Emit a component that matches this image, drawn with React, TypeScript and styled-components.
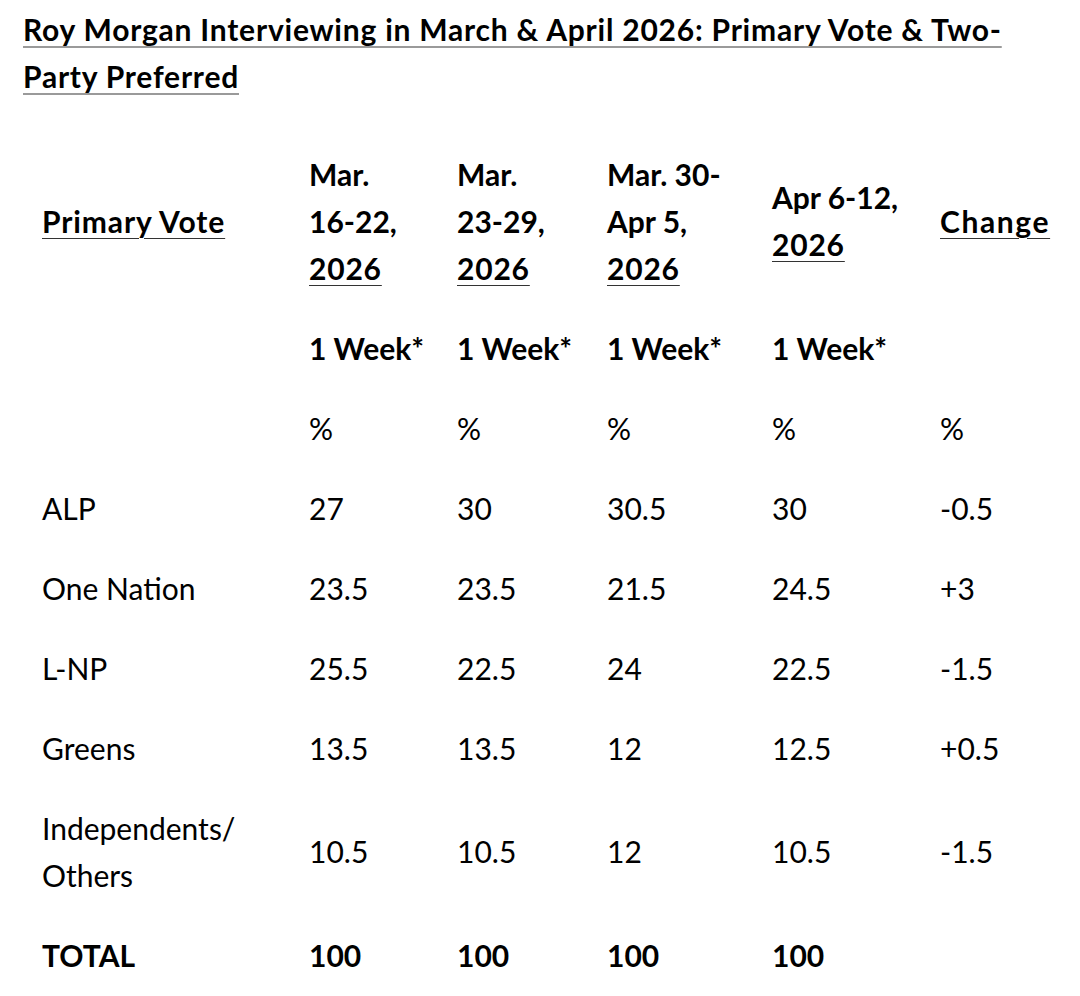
import React from 'react'
import styled, { createGlobalStyle } from 'styled-components'

const GlobalStyle = createGlobalStyle`
    html, body {
        margin: 0;
        padding: 0;
        background: #ffffff;
    }
    body {
        font-family: Lato, 'Liberation Sans', sans-serif;
        color: #000000;
    }
`

const Page = styled.div`
    padding: 6px 23px 0 23px;
    width: 1080px;
    box-sizing: border-box;
`

const Title = styled.h2`
    margin: 0 0 34px 0;
    font-size: 30px;
    line-height: 47px;
    font-weight: 700;
`

const TitleLink = styled.span`
    letter-spacing: 0.78px;
    text-decoration: underline;
    text-decoration-color: #9a9a9a;
    text-decoration-thickness: 2px;
    text-underline-offset: 5px;
`

const Table = styled.table`
    border-collapse: collapse;
    table-layout: fixed;
    width: 1047px;
    font-size: 30px;
    line-height: 47px;
`

const Cell = styled.td<{ $bold?: boolean }>`
    padding: 16.5px 10px 16.5px 19px;
    vertical-align: middle;
    text-align: left;
    font-weight: ${(p) => (p.$bold ? 700 : 400)};
    white-space: nowrap;
`

const Underlined = styled.span<{ $spacing?: number }>`
    letter-spacing: ${(p) => p.$spacing ?? 0}px;
    text-decoration: underline;
    text-decoration-color: #333333;
    text-decoration-thickness: 1px;
    text-underline-offset: 5px;
`

const widths = [267, 148, 150, 165, 168, 149]

const periods: string[][] = [
    ['Mar.', '16-22,'],
    ['Mar.', '23-29,'],
    ['Mar. 30-', 'Apr 5,'],
    ['Apr 6-12,'],
]

const rows: { label: React.ReactNode; values: string[] }[] = [
    { label: 'ALP', values: ['27', '30', '30.5', '30', '-0.5'] },
    { label: 'One Nation', values: ['23.5', '23.5', '21.5', '24.5', '+3'] },
    { label: 'L-NP', values: ['25.5', '22.5', '24', '22.5', '-1.5'] },
    { label: 'Greens', values: ['13.5', '13.5', '12', '12.5', '+0.5'] },
    {
        label: (
            <>
                Independents/
                <br />
                Others
            </>
        ),
        values: ['10.5', '10.5', '12', '10.5', '-1.5'],
    },
]

export default function App() {
    return (
        <>
            <GlobalStyle />
            <Page>
                <Title>
                    <TitleLink>
                        Roy Morgan Interviewing in March &amp; April 2026: Primary Vote &amp; Two-Party Preferred
                    </TitleLink>
                </Title>
                <Table>
                    <colgroup>
                        {widths.map((w, i) => (
                            <col key={i} style={{ width: w }} />
                        ))}
                    </colgroup>
                    <tbody>
                        <tr>
                            <Cell $bold>
                                <Underlined $spacing={0.9}>Primary Vote</Underlined>
                            </Cell>
                            {periods.map((lines, i) => (
                                <Cell key={i} $bold>
                                    {lines.map((l, j) => (
                                        <React.Fragment key={j}>
                                            {l}
                                            <br />
                                        </React.Fragment>
                                    ))}
                                    <Underlined $spacing={0.8}>2026</Underlined>
                                </Cell>
                            ))}
                            <Cell $bold>
                                <Underlined $spacing={1.6}>Change</Underlined>
                            </Cell>
                        </tr>
                        <tr>
                            <Cell />
                            {periods.map((_, i) => (
                                <Cell key={i} $bold>
                                    1 Week*
                                </Cell>
                            ))}
                            <Cell />
                        </tr>
                        <tr>
                            <Cell />
                            {[0, 1, 2, 3, 4].map((i) => (
                                <Cell key={i}>%</Cell>
                            ))}
                        </tr>
                        {rows.map((r, i) => (
                            <tr key={i}>
                                <Cell>{r.label}</Cell>
                                {r.values.map((v, j) => (
                                    <Cell key={j}>{v}</Cell>
                                ))}
                            </tr>
                        ))}
                        <tr>
                            <Cell $bold>TOTAL</Cell>
                            {[0, 1, 2, 3].map((i) => (
                                <Cell key={i} $bold>
                                    100
                                </Cell>
                            ))}
                            <Cell />
                        </tr>
                    </tbody>
                </Table>
            </Page>
        </>
    )
}
